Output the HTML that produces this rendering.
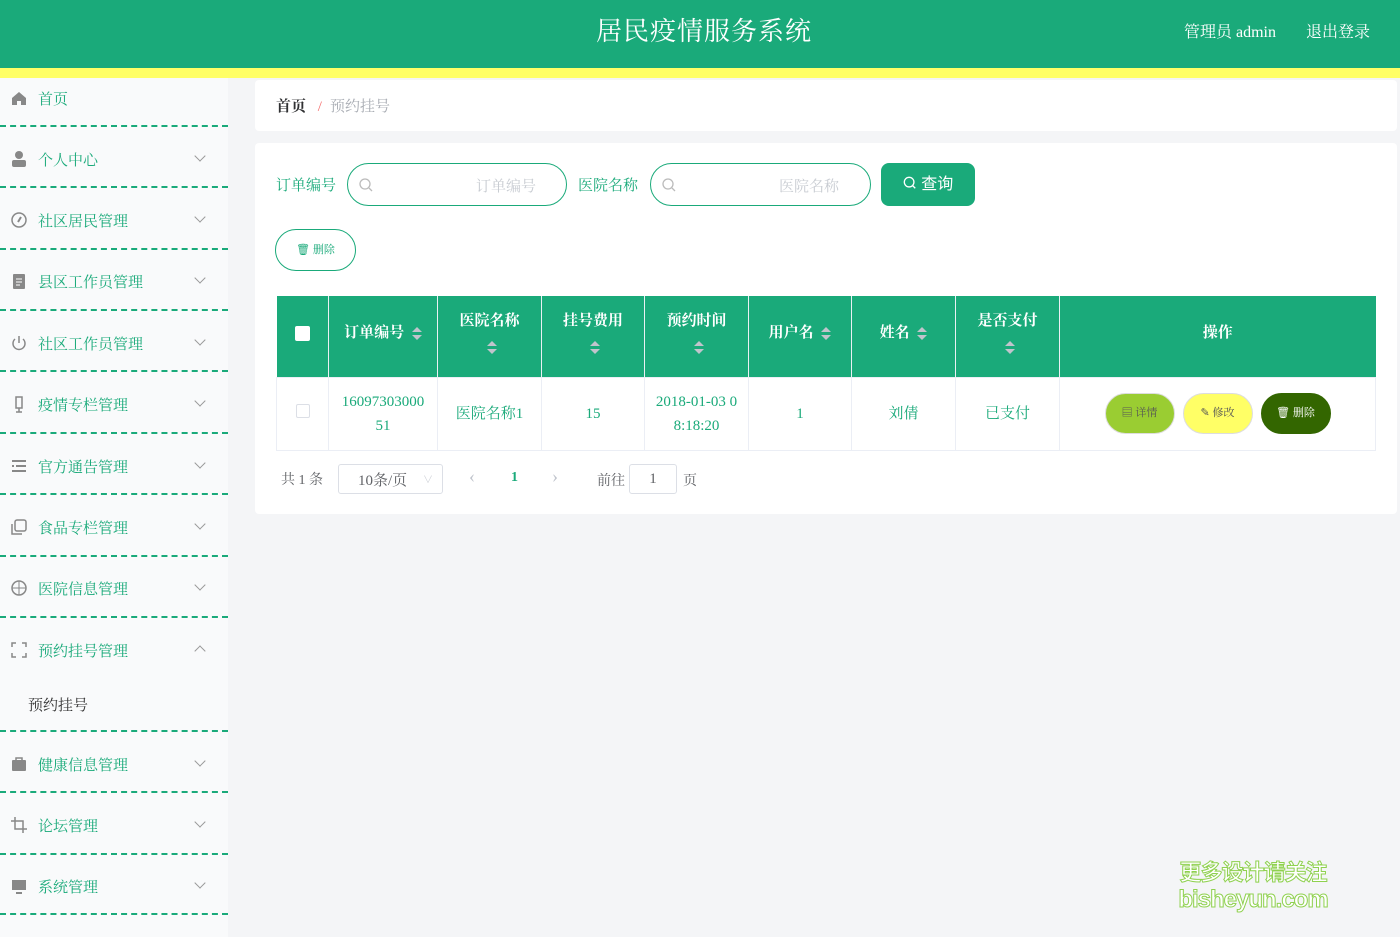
<!DOCTYPE html>
<html><head><meta charset="utf-8"><style>
*{box-sizing:border-box;margin:0;padding:0}
body{width:1400px;height:937px;overflow:hidden;background:#f4f5f7;font-family:"Liberation Serif","Noto Serif CJK SC",serif;position:relative}
.hdr{position:absolute;left:0;top:0;width:1400px;height:68px;background:#1aaa7a}
.band{position:absolute;left:0;top:68px;width:1400px;height:10px;background:#ffff66}
.title{position:absolute;left:4px;width:1400px;top:11px;text-align:center;color:#fff;font-size:26px;letter-spacing:1px}
.hr{position:absolute;top:19px;color:#fff;font-size:16px}
.side{position:absolute;left:0;top:78px;width:228px;height:859px;background:#f9fafb}
.it{position:absolute;left:0;width:228px;color:#1aaa7a;font-size:15px}
.it .ic{position:absolute;left:10px;top:1px;width:18px;height:18px}
.it .tx{position:absolute;left:38px;top:0}
.it .ar{position:absolute;left:196px;top:3px;width:8px;height:8px;border-right:1px solid #999;border-bottom:1px solid #999;transform:rotate(45deg)}
.dash{position:absolute;left:0;width:228px;border-top:2px dashed #1aaa7a}
.card{position:absolute;background:#fff;border-radius:4px}
.lbl{position:absolute;color:#1aaa7a;font-size:15px}
.inp{position:absolute;height:43px;border:1px solid #1aaa7a;border-radius:22px;background:#fff}
.inp span{position:absolute;top:11px;color:#c8ccd2;font-size:15px}
table{position:absolute;left:276px;top:296px;border-collapse:collapse;width:1100px;font-size:15px}
th{background:#1aaa7a;color:#fff;font-weight:bold;border-right:1px solid #eaf0f4;height:81px;text-align:center;font-size:15px;line-height:20px;padding-bottom:6px}
td{height:73px;border:1px solid #ebeef5;color:#1aaa7a;text-align:center;line-height:24px}
.sort{display:inline-block;width:10px;height:14px;vertical-align:middle;position:relative;margin-left:4px}
.sort:before{content:"";position:absolute;left:0;top:0;border:5px solid transparent;border-bottom:5px solid #c0c4cc;border-top:0}
.sort:after{content:"";position:absolute;left:0;top:8px;border:5px solid transparent;border-top:5px solid #c0c4cc;border-bottom:0}
.btn{display:inline-block;width:70px;height:41px;border-radius:21px;line-height:39px;font-size:11px;margin:0 4px;vertical-align:middle;border:1px solid #ddd}
</style></head><body>
<div class="hdr"></div><div class="band"></div>
<div class="title">居民疫情服务系统</div>
<div class="hr" style="left:1184px">管理员 admin</div>
<div class="hr" style="left:1306px">退出登录</div>
<div class="side"></div>

<div class="it" style="top:88px"><svg class="ic" viewBox="0 0 18 18"><path d="M2 9L9 3l7 6v7h-5v-4H7v4H2z" fill="#888"/></svg><span class="tx">首页</span></div>
<div class="dash" style="top:125px"></div>
<div class="it" style="top:149px"><svg class="ic" viewBox="0 0 18 18"><circle cx="9" cy="5" r="4" fill="#888"/><rect x="2" y="10" width="14" height="7" rx="2" fill="#888"/></svg><span class="tx">个人中心</span><i class="ar"></i></div>
<div class="dash" style="top:186px"></div>
<div class="it" style="top:210px"><svg class="ic" viewBox="0 0 18 18"><circle cx="9" cy="9" r="7" fill="none" stroke="#888" stroke-width="1.5"/><path d="M11 6l-3 5" stroke="#888" stroke-width="2"/></svg><span class="tx">社区居民管理</span><i class="ar"></i></div>
<div class="dash" style="top:248px"></div>
<div class="it" style="top:271px"><svg class="ic" viewBox="0 0 18 18"><rect x="3" y="2" width="12" height="15" rx="1" fill="#888"/><path d="M6 7h6M6 10h6M6 13h4" stroke="#fff"/></svg><span class="tx">县区工作员管理</span><i class="ar"></i></div>
<div class="dash" style="top:309px"></div>
<div class="it" style="top:333px"><svg class="ic" viewBox="0 0 18 18"><path d="M5 5a6 6 0 1 0 8 0M9 2v7" fill="none" stroke="#888" stroke-width="1.5"/></svg><span class="tx">社区工作员管理</span><i class="ar"></i></div>
<div class="dash" style="top:370px"></div>
<div class="it" style="top:394px"><svg class="ic" viewBox="0 0 18 18"><rect x="6" y="2" width="6" height="11" fill="none" stroke="#888" stroke-width="1.5"/><path d="M9 13v4M6 17h6" stroke="#888" stroke-width="1.5"/></svg><span class="tx">疫情专栏管理</span><i class="ar"></i></div>
<div class="dash" style="top:432px"></div>
<div class="it" style="top:456px"><svg class="ic" viewBox="0 0 18 18"><path d="M2 4h14M6 9h10M2 14h14M2 9h2" stroke="#888" stroke-width="2"/></svg><span class="tx">官方通告管理</span><i class="ar"></i></div>
<div class="dash" style="top:493px"></div>
<div class="it" style="top:517px"><svg class="ic" viewBox="0 0 18 18"><rect x="5" y="2" width="11" height="11" rx="2" fill="none" stroke="#888" stroke-width="1.5"/><path d="M2 6v10h10" fill="none" stroke="#888" stroke-width="1.5"/></svg><span class="tx">食品专栏管理</span><i class="ar"></i></div>
<div class="dash" style="top:555px"></div>
<div class="it" style="top:578px"><svg class="ic" viewBox="0 0 18 18"><circle cx="9" cy="9" r="7" fill="none" stroke="#888" stroke-width="1.5"/><path d="M2 9h14M9 2v14" stroke="#888"/></svg><span class="tx">医院信息管理</span><i class="ar"></i></div>
<div class="dash" style="top:616px"></div>
<div class="it" style="top:640px"><svg class="ic" viewBox="0 0 18 18"><path d="M2 6V2h4M12 2h4v4M16 12v4h-4M6 16H2v-4" fill="none" stroke="#888" stroke-width="1.5"/></svg><span class="tx">预约挂号管理</span><i class="ar" style="transform:rotate(225deg);top:7px"></i></div>
<div style="position:absolute;left:28px;top:694px;font-size:15px;color:#333">预约挂号</div>
<div class="dash" style="top:730px"></div>
<div class="it" style="top:754px"><svg class="ic" viewBox="0 0 18 18"><rect x="2" y="5" width="14" height="11" rx="1" fill="#888"/><path d="M6 5V3h6v2" fill="none" stroke="#888" stroke-width="1.5"/></svg><span class="tx">健康信息管理</span><i class="ar"></i></div>
<div class="dash" style="top:791px"></div>
<div class="it" style="top:815px"><svg class="ic" viewBox="0 0 18 18"><path d="M5 1v12h12M1 5h12v12" fill="none" stroke="#888" stroke-width="1.5"/></svg><span class="tx">论坛管理</span><i class="ar"></i></div>
<div class="dash" style="top:853px"></div>
<div class="it" style="top:876px"><svg class="ic" viewBox="0 0 18 18"><rect x="2" y="3" width="14" height="10" fill="#888"/><path d="M6 16h6" stroke="#888" stroke-width="2"/></svg><span class="tx">系统管理</span><i class="ar"></i></div>
<div class="dash" style="top:913px"></div>

<div class="card" style="left:255px;top:80px;width:1142px;height:51px"></div>
<div style="position:absolute;left:276px;top:95px;font-size:15px;color:#303133;font-weight:bold">首页 <span style="color:#f56c6c;font-weight:normal;margin:0 8px">/</span><span style="color:#a8acb3;font-weight:normal">预约挂号</span></div>

<div class="card" style="left:255px;top:143px;width:1142px;height:371px"></div>
<div class="lbl" style="left:276px;top:174px">订单编号</div>
<div class="inp" style="left:347px;top:163px;width:220px"><svg style="position:absolute;left:10px;top:13px" width="16" height="16" viewBox="0 0 16 16"><circle cx="7" cy="7" r="5" fill="none" stroke="#bbb" stroke-width="1.3"/><path d="M11 11l3 3" stroke="#bbb" stroke-width="1.3"/></svg><span style="left:128px">订单编号</span></div>
<div class="lbl" style="left:578px;top:174px">医院名称</div>
<div class="inp" style="left:650px;top:163px;width:221px"><svg style="position:absolute;left:10px;top:13px" width="16" height="16" viewBox="0 0 16 16"><circle cx="7" cy="7" r="5" fill="none" stroke="#bbb" stroke-width="1.3"/><path d="M11 11l3 3" stroke="#bbb" stroke-width="1.3"/></svg><span style="left:128px">医院名称</span></div>
<div style="position:absolute;left:881px;top:163px;width:94px;height:43px;background:#1aaa7a;border-radius:8px;color:#fff;font-size:16px;line-height:44px;text-align:center;font-family:'Liberation Sans','Noto Sans CJK SC',sans-serif">
<svg width="14" height="14" viewBox="0 0 16 16" style="vertical-align:-1px"><circle cx="7" cy="7" r="5.5" fill="none" stroke="#fff" stroke-width="1.5"/><path d="M11 11l3 3" stroke="#fff" stroke-width="1.5"/></svg> 查询</div>
<div style="position:absolute;left:275px;top:229px;width:81px;height:42px;border:1px solid #1aaa7a;border-radius:21px;color:#1aaa7a;font-size:11px;line-height:40px;text-align:center">🗑 删除</div>

<table>
<tr><th style="width:52px"><span style="display:inline-block;width:15px;height:15px;background:#fff;border-radius:2px;vertical-align:middle"></span></th>
<th style="width:109px">订单编号 <i class="sort"></i></th>
<th style="width:104px">医院名称<br><i class="sort" style="margin-top:10px"></i></th>
<th style="width:103px">挂号费用<br><i class="sort" style="margin-top:10px"></i></th>
<th style="width:104px">预约时间<br><i class="sort" style="margin-top:10px"></i></th>
<th style="width:103px">用户名 <i class="sort"></i></th>
<th style="width:104px">姓名 <i class="sort"></i></th>
<th style="width:104px">是否支付<br><i class="sort" style="margin-top:10px"></i></th>
<th style="border-right:0">操作</th></tr>
<tr><td><span style="display:inline-block;width:14px;height:14px;border:1px solid #dcdfe6;border-radius:2px"></span></td>
<td>16097303000<br>51</td><td>医院名称1</td><td>15</td><td>2018-01-03 0<br>8:18:20</td><td>1</td><td>刘倩</td><td>已支付</td>
<td><span class="btn" style="background:#9acd32;color:#555">▤ 详情</span><span class="btn" style="background:#ffff66;color:#555">✎ 修改</span><span class="btn" style="background:#336600;color:#fff;border-color:#336600">🗑 删除</span></td></tr>
</table>

<div style="position:absolute;left:281px;top:469px;font-size:14px;color:#606266">共 1 条</div>
<div style="position:absolute;left:338px;top:464px;width:105px;height:30px;border:1px solid #dcdfe6;border-radius:3px;font-size:15px;color:#606266;padding:4px 0 0 19px">10条/页<span style="position:absolute;right:9px;top:6px;font-size:10px;color:#c0c4cc">∨</span></div>
<div style="position:absolute;left:469px;top:466px;color:#c0c4cc;font-size:18px">‹</div>
<div style="position:absolute;left:511px;top:470px;color:#1aaa7a;font-size:14px;font-weight:bold">1</div>
<div style="position:absolute;left:552px;top:466px;color:#c0c4cc;font-size:18px">›</div>
<div style="position:absolute;left:597px;top:470px;color:#606266;font-size:14px">前往</div>
<div style="position:absolute;left:629px;top:464px;width:48px;height:30px;border:1px solid #dcdfe6;border-radius:3px;text-align:center;line-height:28px;font-size:15px;color:#606266">1</div>
<div style="position:absolute;left:683px;top:470px;color:#606266;font-size:14px">页</div>

<div style="position:absolute;left:1160px;top:858px;font-family:'Noto Sans CJK SC',sans-serif;font-weight:bold;font-size:22px;line-height:27px;color:#fff;-webkit-text-stroke:1px #8fd14f;text-align:center;width:186px;white-space:nowrap;letter-spacing:-1px">更多设计请关注<br><span style="font-family:'Liberation Sans',sans-serif;font-size:24px">bisheyun.com</span></div>
</body></html>
